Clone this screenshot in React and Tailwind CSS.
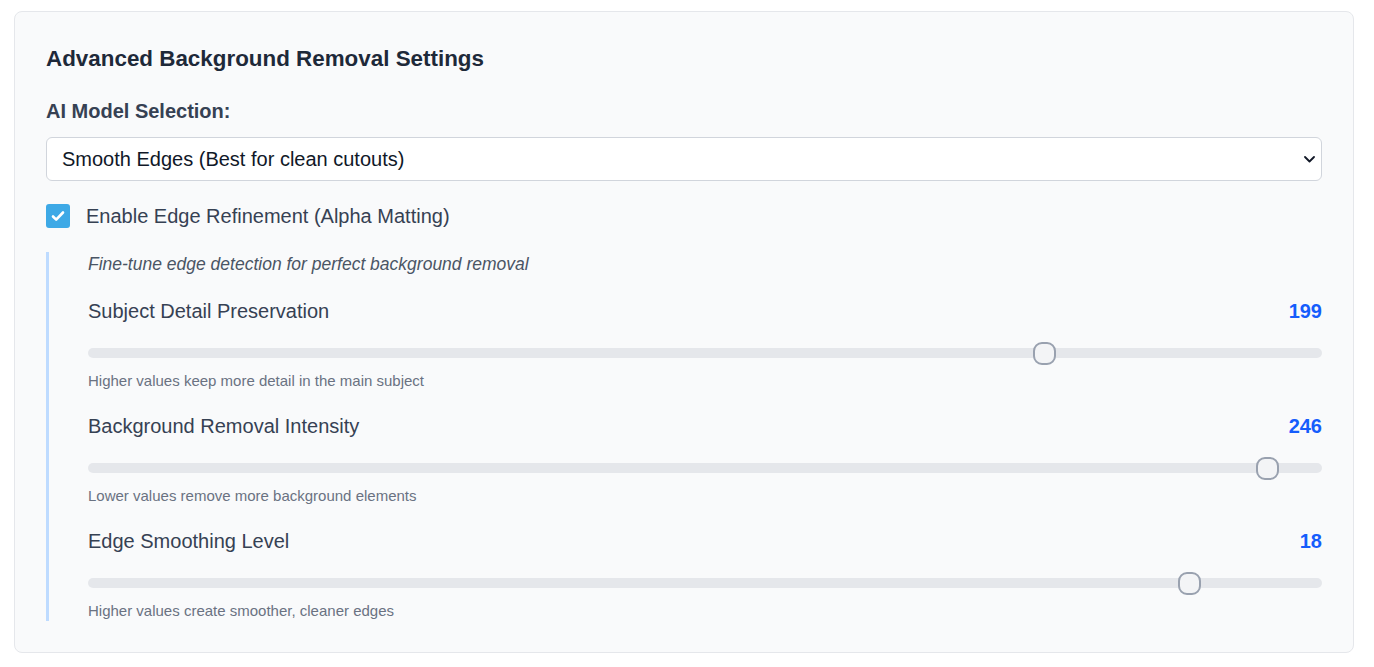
import { useState } from 'react';

const sliders = [
  { label: 'Subject Detail Preservation', value: 199, max: 255, help: 'Higher values keep more detail in the main subject' },
  { label: 'Background Removal Intensity', value: 246, max: 255, help: 'Lower values remove more background elements' },
  { label: 'Edge Smoothing Level', value: 18, max: 20, help: 'Higher values create smoother, cleaner edges' },
];

function Slider({ label, value, max, help }) {
  const pct = value / max;
  return (
    <div className="flex flex-col">
      <div className="flex h-7 items-center justify-between">
        <span className="text-[20px] text-gray-700">{label}</span>
        <span className="text-[20px] font-bold text-blue-600">{value}</span>
      </div>
      {/* track + thumb */}
      <div className="relative mt-4 flex h-6 items-center">
        <div className="h-2.5 w-full rounded-full bg-gray-200" />
        <div
          className="absolute top-[1px] h-[23px] w-[23px] rounded-[9px] border-2 border-gray-400 bg-gray-100"
          style={{ left: `calc((100% - 23px) * ${pct})` }}
        />
      </div>
      <p className="mt-1.5 h-5 text-[15px] leading-5 text-gray-500">{help}</p>
    </div>
  );
}

export default function App() {
  const [refine, setRefine] = useState(true);

  return (
    <div className="min-h-screen bg-white px-[14px] pt-[11px] font-['Liberation_Sans',Arial,sans-serif]">
      <div className="w-[1340px] rounded-lg border border-gray-200 bg-gray-50 p-[31px]">
        <h2 className="h-8 text-[22.4px] font-bold leading-8 text-gray-800">Advanced Background Removal Settings</h2>

        <label className="mt-[22px] block h-7 text-[20px] font-semibold leading-7 text-gray-700">AI Model Selection:</label>
        <div className="relative mt-3">
          <select className="h-11 w-full appearance-none rounded-md border border-gray-300 bg-white px-[15px] text-[20px] text-gray-900 outline-none">
            <option>Smooth Edges (Best for clean cutouts)</option>
            <option>Standard</option>
          </select>
          <svg className="pointer-events-none absolute right-[7px] top-[19px]" width="11" height="7" viewBox="0 0 11 7" fill="none">
            <path d="M1 1l4.5 4.5L10 1" stroke="#111827" strokeWidth="1.8" strokeLinecap="round" strokeLinejoin="round" />
          </svg>
        </div>

        <label className="mt-[21px] flex h-7 cursor-pointer items-center gap-4" onClick={() => setRefine(!refine)}>
          <span className={`flex h-6 w-6 items-center justify-center rounded-[3px] ${refine ? 'bg-[#3ea9e6]' : 'border border-gray-400 bg-white'}`}>
            {refine && (
              <svg width="16" height="16" viewBox="0 0 16 16" fill="none">
                <path d="M3 8.5l3.2 3.2L13 4.5" stroke="white" strokeWidth="2.6" strokeLinecap="round" strokeLinejoin="round" />
              </svg>
            )}
          </span>
          <span className="text-[20px] text-gray-700">Enable Edge Refinement (Alpha Matting)</span>
        </label>

        <div className="mt-[22px] flex flex-col gap-[21px] border-l-[3px] border-blue-200 pl-[39px]">
          <p className="h-6 text-[17.5px] italic leading-6 text-gray-600">Fine-tune edge detection for perfect background removal</p>
          {sliders.map((s) => (
            <Slider key={s.label} {...s} />
          ))}
        </div>
      </div>
    </div>
  );
}
